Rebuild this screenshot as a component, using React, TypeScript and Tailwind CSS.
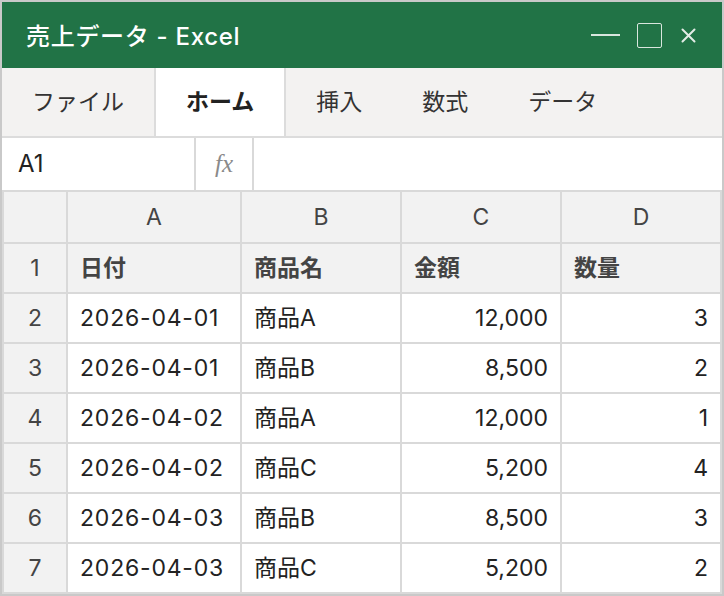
import React from "react";

const FONT = { fontFamily: '"Inter", "Noto Sans CJK JP", sans-serif' };

const rows: [string, string, string, string, string][] = [
  ["2", "2026-04-01", "商品A", "12,000", "3"],
  ["3", "2026-04-01", "商品B", "8,500", "2"],
  ["4", "2026-04-02", "商品A", "12,000", "1"],
  ["5", "2026-04-02", "商品C", "5,200", "4"],
  ["6", "2026-04-03", "商品B", "8,500", "3"],
  ["7", "2026-04-03", "商品C", "5,200", "2"],
];

export default function App() {
  return (
    <div
      className="w-[724px] h-[596px] border-2 border-[#c9c9c9] bg-white flex flex-col overflow-hidden"
      style={FONT}
    >
      {/* Title bar */}
      <div className="h-[66px] shrink-0 bg-[#217346] flex items-center pl-[24px] pr-[26px] text-white">
        <div className="text-[24px] font-medium flex-1 pt-[3px] tracking-[0.7px]">売上データ - Excel</div>
        <div className="flex items-center">
          <div className="w-[29px] h-[2px] bg-[#d9e6de]" />
          <div className="ml-[17px] w-[25px] h-[25px] border-[1.5px] border-[#d9e6de] rounded-[2px]" />
          <svg className="ml-[19px]" width="15" height="15" viewBox="0 0 15 15">
            <path d="M1.5 1.5 L13.5 13.5 M13.5 1.5 L1.5 13.5" stroke="#e3ece6" strokeWidth="2" strokeLinecap="round" />
          </svg>
        </div>
      </div>

      {/* Tabs */}
      <div className="h-[70px] shrink-0 bg-[#f3f2f1] border-b-2 border-[#dcdcdc] flex items-stretch text-[23px] text-[#333]">
        <div className="px-[30px] flex items-center">ファイル</div>
        <div className="px-[30px] flex items-center bg-white border-x-2 border-[#dcdcdc] font-bold text-[#222]">ホーム</div>
        <div className="px-[30px] flex items-center">挿入</div>
        <div className="px-[30px] flex items-center">数式</div>
        <div className="px-[30px] flex items-center">データ</div>
      </div>

      {/* Formula bar */}
      <div className="h-[52px] shrink-0 flex items-stretch bg-white">
        <div className="w-[192px] pl-[16px] flex items-center text-[24px] text-[#222]">A1</div>
        <div className="w-[2px] bg-[#d9d9d9]" />
        <div
          className="w-[56px] flex items-center justify-center text-[25px] italic text-[#8a8a8a]"
          style={{ fontFamily: '"Liberation Serif", "DejaVu Serif", serif' }}
        >
          fx
        </div>
        <div className="w-[2px] bg-[#d9d9d9]" />
        <div className="flex-1" />
      </div>

      {/* Grid */}
      <div className="flex-1 bg-[#d9d9d9] p-[2px] grid grid-cols-[62px_172px_158px_158px_158px] grid-rows-[50px_repeat(7,48px)] gap-[2px] text-[23px]">
        <div className="bg-[#f2f2f2]" />
        {["A", "B", "C", "D"].map((c) => (
          <div key={c} className="bg-[#f2f2f2] flex items-center justify-center text-[#444]">
            {c}
          </div>
        ))}
        <div className="bg-[#f2f2f2] flex items-center justify-center text-[#444]">1</div>
        {["日付", "商品名", "金額", "数量"].map((h) => (
          <div key={h} className="bg-[#f2f2f2] flex items-center px-3 font-semibold text-[#444]">
            {h}
          </div>
        ))}
        {rows.map((r) => (
          <React.Fragment key={r[0]}>
            <div className="bg-[#f2f2f2] flex items-center justify-center text-[#444]">{r[0]}</div>
            <div className="bg-white flex items-center px-3 text-[#222] tracking-[0.8px]">{r[1]}</div>
            <div className="bg-white flex items-center px-3 text-[#222]">{r[2]}</div>
            <div className="bg-white flex items-center justify-end px-3 text-[#222]">{r[3]}</div>
            <div className="bg-white flex items-center justify-end px-3 text-[#222]">{r[4]}</div>
          </React.Fragment>
        ))}
      </div>
    </div>
  );
}
